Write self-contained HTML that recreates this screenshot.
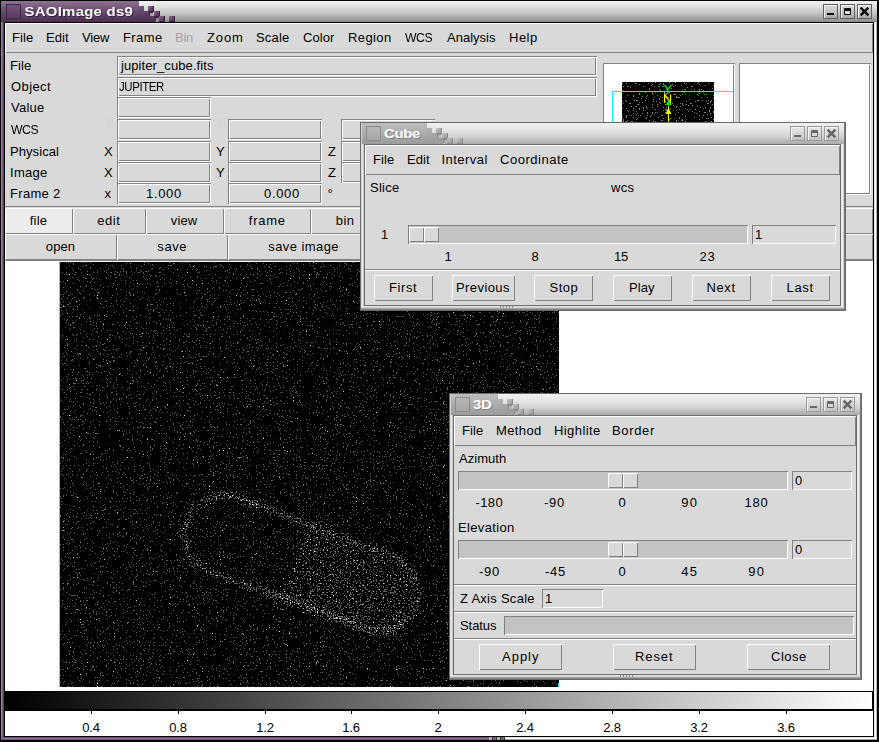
<!DOCTYPE html>
<html><head><meta charset="utf-8"><title>SAOImage ds9</title>
<style>
html,body{margin:0;padding:0;}
body{width:879px;height:742px;position:relative;overflow:hidden;background:#d9d9d9;font-family:"Liberation Sans",sans-serif;}
body>div,body>svg,body>span{position:absolute;display:block;}
.t{white-space:nowrap;line-height:16px;height:16px;}
</style></head><body>
<div style="left:0px;top:0px;width:879px;height:742px;background:#000;"></div>
<div style="left:1px;top:1px;width:3px;height:739px;background:linear-gradient(90deg,#a184a3 0 33%,#7b5c7f 33% 66%,#5a3c5f 66%);"></div>
<div style="left:874px;top:1px;width:3px;height:739px;background:linear-gradient(90deg,#e4e4e4 0 33%,#ffffff 33% 66%,#b4b4b4 66%);"></div>
<div style="left:1px;top:737px;width:876px;height:3px;background:linear-gradient(180deg,#ececec 0 33%,#ffffff 33% 66%,#a8a8a8 66%);"></div>
<div style="left:1px;top:737px;width:488px;height:3px;background:linear-gradient(180deg,#6b4c70 0 33%,#93759a 33% 66%,#6f5074 66%);"></div>
<div style="left:1px;top:1px;width:876px;height:21px;background:linear-gradient(180deg,#f2f2f2 0%,#e2e2e2 25%,#c4c4c4 60%,#8c8c8c 100%);"></div>
<div style="left:1px;top:1px;width:138px;height:21px;background:linear-gradient(180deg,#8f7192 0%,#6d4e72 45%,#4b3050 100%);"></div>
<div style="left:139px;top:6px;width:5px;height:16px;background:linear-gradient(180deg,#73547a,#4b3050);"></div>
<div style="left:144px;top:11px;width:5px;height:11px;background:linear-gradient(180deg,#65466b,#4b3050);"></div>
<div style="left:149px;top:16px;width:6px;height:6px;background:linear-gradient(180deg,#5a3c5f,#4b3050);"></div>
<div style="left:148px;top:6px;width:6px;height:6px;background:linear-gradient(135deg,#8a6c8e,#5b3c60 60%,#452a4a);box-shadow:inset -1px -1px 0 #3a2240;"></div>
<div style="left:154px;top:11px;width:6px;height:6px;background:linear-gradient(135deg,#8a6c8e,#5b3c60 60%,#452a4a);box-shadow:inset -1px -1px 0 #3a2240;"></div>
<div style="left:159px;top:16px;width:6px;height:6px;background:linear-gradient(135deg,#8a6c8e,#5b3c60 60%,#452a4a);box-shadow:inset -1px -1px 0 #3a2240;"></div>
<div style="left:169px;top:16px;width:6px;height:6px;background:linear-gradient(135deg,#8a6c8e,#5b3c60 60%,#452a4a);box-shadow:inset -1px -1px 0 #3a2240;"></div>
<div style="left:149px;top:12px;width:4px;height:4px;background:#a99fab;box-shadow:inset 1px 1px 0 #3a2240;"></div>
<div style="left:155px;top:17px;width:4px;height:4px;background:#8f8890;box-shadow:inset 1px 1px 0 #3a2240;"></div>
<div style="left:6px;top:4px;width:15px;height:15px;background:linear-gradient(180deg,#73557a,#583b5e);box-shadow:inset 0 0 0 1px #3d2643;"></div>
<span id="t1" class="t" style="left:24.50px;top:16.00px;color:#fff;font-size:15px;font-weight:bold;letter-spacing:0.225px;text-shadow:1px 1px 0 rgba(40,20,45,.8);margin-top:-12.70px;transform-origin:0 13.20px;transform:scale(1.0000,0.87);">SAOImage ds9</span>
<div style="left:823px;top:4px;width:15px;height:15px;box-sizing:border-box;border:1px solid #5e5e5e;background:linear-gradient(180deg,#dedede,#a9a9a9);box-shadow:inset 1px 1px 0 #f4f4f4;"></div>
<div style="left:827px;top:13px;width:7px;height:2px;background:#0a0a0a;"></div>
<div style="left:840px;top:4px;width:15px;height:15px;box-sizing:border-box;border:1px solid #5e5e5e;background:linear-gradient(180deg,#dedede,#a9a9a9);box-shadow:inset 1px 1px 0 #f4f4f4;"></div>
<div style="left:844px;top:8px;width:7px;height:7px;border:1px solid #0a0a0a;border-top-width:3px;box-sizing:border-box;background:#dadada;border-radius:1px;"></div>
<div style="left:857px;top:4px;width:15px;height:15px;box-sizing:border-box;border:1px solid #5e5e5e;background:linear-gradient(180deg,#dedede,#a9a9a9);box-shadow:inset 1px 1px 0 #f4f4f4;"></div>
<svg style="left:857px;top:4px" width="15" height="15" viewBox="0 0 15 15"><path d="M3.6 3.6 L11.4 11.4 M11.4 3.6 L3.6 11.4" stroke="#0a0a0a" stroke-width="2.5" stroke-linecap="butt"/></svg>
<div style="left:5px;top:23px;width:868px;height:713px;background:#d9d9d9;"></div>
<div style="left:5px;top:23px;width:868px;height:30px;background:#d9d9d9;box-shadow:inset 1px 1px 0 #ffffff,inset -1px -1px 0 #828282;"></div>
<span id="t2" class="t" style="left:12.00px;top:42.00px;color:#000;font-size:13px;font-weight:normal;letter-spacing:0.094px;margin-top:-12.00px;">File</span>
<span id="t3" class="t" style="left:46.00px;top:42.00px;color:#000;font-size:13px;font-weight:normal;letter-spacing:0.070px;margin-top:-12.00px;">Edit</span>
<span id="t4" class="t" style="left:82.00px;top:42.00px;color:#000;font-size:13px;font-weight:normal;letter-spacing:-0.185px;margin-top:-12.00px;">View</span>
<span id="t5" class="t" style="left:123.00px;top:42.00px;color:#000;font-size:13px;font-weight:normal;letter-spacing:0.418px;margin-top:-12.00px;">Frame</span>
<span id="t6" class="t" style="left:207.00px;top:42.00px;color:#000;font-size:13px;font-weight:normal;letter-spacing:0.866px;margin-top:-12.00px;">Zoom</span>
<span id="t7" class="t" style="left:256.00px;top:42.00px;color:#000;font-size:13px;font-weight:normal;letter-spacing:0.178px;margin-top:-12.00px;">Scale</span>
<span id="t8" class="t" style="left:303.00px;top:42.00px;color:#000;font-size:13px;font-weight:normal;letter-spacing:0.066px;margin-top:-12.00px;">Color</span>
<span id="t9" class="t" style="left:348.00px;top:42.00px;color:#000;font-size:13px;font-weight:normal;letter-spacing:0.407px;margin-top:-12.00px;">Region</span>
<span id="t10" class="t" style="left:405.00px;top:42.00px;color:#000;font-size:13px;font-weight:normal;letter-spacing:-0.450px;margin-top:-12.00px;transform-origin:0 12.50px;transform:scale(0.9409,1);">WCS</span>
<span id="t11" class="t" style="left:447.00px;top:42.00px;color:#000;font-size:13px;font-weight:normal;letter-spacing:0.013px;margin-top:-12.00px;">Analysis</span>
<span id="t12" class="t" style="left:509.00px;top:42.00px;color:#000;font-size:13px;font-weight:normal;letter-spacing:0.498px;margin-top:-12.00px;">Help</span>
<span id="t13" class="t" style="left:175.00px;top:42.00px;color:#a3a3a3;font-size:13px;font-weight:normal;letter-spacing:-0.280px;margin-top:-12.00px;">Bin</span>
<span id="t14" class="t" style="left:10.00px;top:70.00px;color:#000;font-size:13px;font-weight:normal;letter-spacing:0.094px;margin-top:-12.00px;">File</span>
<span id="t15" class="t" style="left:11.00px;top:91.00px;color:#000;font-size:13px;font-weight:normal;letter-spacing:0.408px;margin-top:-12.00px;">Object</span>
<span id="t16" class="t" style="left:11.00px;top:112.00px;color:#000;font-size:13px;font-weight:normal;letter-spacing:0.236px;margin-top:-12.00px;">Value</span>
<span id="t17" class="t" style="left:11.00px;top:134.00px;color:#000;font-size:13px;font-weight:normal;letter-spacing:-0.450px;margin-top:-12.00px;transform-origin:0 12.50px;transform:scale(0.9409,1);">WCS</span>
<span id="t18" class="t" style="left:10.00px;top:156.00px;color:#000;font-size:13px;font-weight:normal;letter-spacing:0.069px;margin-top:-12.00px;">Physical</span>
<span id="t19" class="t" style="left:10.00px;top:177.00px;color:#000;font-size:13px;font-weight:normal;letter-spacing:0.275px;margin-top:-12.00px;">Image</span>
<span id="t20" class="t" style="left:10.00px;top:198.00px;color:#000;font-size:13px;font-weight:normal;letter-spacing:0.305px;margin-top:-12.00px;">Frame 2</span>
<div style="left:117px;top:56px;width:480px;height:20px;background:#d9d9d9;box-shadow:inset 1px 1px 0 #828282,inset -1px -1px 0 #ffffff,inset 2px 2px 0 #ffffff,inset -2px -2px 0 #828282;"></div>
<div style="left:117px;top:77px;width:480px;height:20px;background:#d9d9d9;box-shadow:inset 1px 1px 0 #828282,inset -1px -1px 0 #ffffff,inset 2px 2px 0 #ffffff,inset -2px -2px 0 #828282;"></div>
<span id="t21" class="t" style="left:121.00px;top:70.00px;color:#000;font-size:13px;font-weight:normal;letter-spacing:0.091px;margin-top:-12.00px;">jupiter_cube.fits</span>
<span id="t22" class="t" style="left:119.00px;top:91.00px;color:#000;font-size:13px;font-weight:normal;letter-spacing:-0.450px;margin-top:-12.00px;transform-origin:0 12.50px;transform:scale(0.8809,1);">JUPITER</span>
<div style="left:117px;top:97px;width:94px;height:21px;background:#d9d9d9;box-shadow:inset 1px 1px 0 #828282,inset -1px -1px 0 #ffffff,inset 2px 2px 0 #ffffff,inset -2px -2px 0 #828282;"></div>
<div style="left:117px;top:119px;width:94px;height:21px;background:#d9d9d9;box-shadow:inset 1px 1px 0 #828282,inset -1px -1px 0 #ffffff,inset 2px 2px 0 #ffffff,inset -2px -2px 0 #828282;"></div>
<div style="left:228px;top:119px;width:94px;height:21px;background:#d9d9d9;box-shadow:inset 1px 1px 0 #828282,inset -1px -1px 0 #ffffff,inset 2px 2px 0 #ffffff,inset -2px -2px 0 #828282;"></div>
<div style="left:341px;top:119px;width:94px;height:21px;background:#d9d9d9;box-shadow:inset 1px 1px 0 #828282,inset -1px -1px 0 #ffffff,inset 2px 2px 0 #ffffff,inset -2px -2px 0 #828282;"></div>
<div style="left:117px;top:141px;width:94px;height:21px;background:#d9d9d9;box-shadow:inset 1px 1px 0 #828282,inset -1px -1px 0 #ffffff,inset 2px 2px 0 #ffffff,inset -2px -2px 0 #828282;"></div>
<div style="left:228px;top:141px;width:94px;height:21px;background:#d9d9d9;box-shadow:inset 1px 1px 0 #828282,inset -1px -1px 0 #ffffff,inset 2px 2px 0 #ffffff,inset -2px -2px 0 #828282;"></div>
<div style="left:341px;top:141px;width:94px;height:21px;background:#d9d9d9;box-shadow:inset 1px 1px 0 #828282,inset -1px -1px 0 #ffffff,inset 2px 2px 0 #ffffff,inset -2px -2px 0 #828282;"></div>
<div style="left:117px;top:162px;width:94px;height:21px;background:#d9d9d9;box-shadow:inset 1px 1px 0 #828282,inset -1px -1px 0 #ffffff,inset 2px 2px 0 #ffffff,inset -2px -2px 0 #828282;"></div>
<div style="left:228px;top:162px;width:94px;height:21px;background:#d9d9d9;box-shadow:inset 1px 1px 0 #828282,inset -1px -1px 0 #ffffff,inset 2px 2px 0 #ffffff,inset -2px -2px 0 #828282;"></div>
<div style="left:341px;top:162px;width:94px;height:21px;background:#d9d9d9;box-shadow:inset 1px 1px 0 #828282,inset -1px -1px 0 #ffffff,inset 2px 2px 0 #ffffff,inset -2px -2px 0 #828282;"></div>
<div style="left:117px;top:183px;width:94px;height:21px;background:#d9d9d9;box-shadow:inset 1px 1px 0 #828282,inset -1px -1px 0 #ffffff,inset 2px 2px 0 #ffffff,inset -2px -2px 0 #828282;"></div>
<div style="left:228px;top:183px;width:94px;height:21px;background:#d9d9d9;box-shadow:inset 1px 1px 0 #828282,inset -1px -1px 0 #ffffff,inset 2px 2px 0 #ffffff,inset -2px -2px 0 #828282;"></div>
<div style="left:107px;top:118px;width:7px;height:10px;background:#d5d8d1;"></div>
<div style="left:218px;top:118px;width:7px;height:10px;background:#d5d8d1;"></div>
<span id="t23" class="t" style="left:104.00px;top:156.00px;color:#000;font-size:13px;font-weight:normal;letter-spacing:0.000px;margin-top:-12.00px;">X</span>
<span id="t24" class="t" style="left:216.00px;top:156.00px;color:#000;font-size:13px;font-weight:normal;letter-spacing:0.000px;margin-top:-12.00px;">Y</span>
<span id="t25" class="t" style="left:328.00px;top:156.00px;color:#000;font-size:13px;font-weight:normal;letter-spacing:0.000px;margin-top:-12.00px;">Z</span>
<span id="t26" class="t" style="left:104.00px;top:177.00px;color:#000;font-size:13px;font-weight:normal;letter-spacing:0.000px;margin-top:-12.00px;">X</span>
<span id="t27" class="t" style="left:216.00px;top:177.00px;color:#000;font-size:13px;font-weight:normal;letter-spacing:0.000px;margin-top:-12.00px;">Y</span>
<span id="t28" class="t" style="left:328.00px;top:177.00px;color:#000;font-size:13px;font-weight:normal;letter-spacing:0.000px;margin-top:-12.00px;">Z</span>
<span id="t29" class="t" style="left:104.50px;top:198.00px;color:#000;font-size:13px;font-weight:normal;letter-spacing:0.000px;margin-top:-12.00px;">x</span>
<span id="t30" class="t" style="left:146.00px;top:198.00px;color:#000;font-size:13px;font-weight:normal;letter-spacing:0.675px;margin-top:-12.00px;">1.000</span>
<span id="t31" class="t" style="left:264.00px;top:198.00px;color:#000;font-size:13px;font-weight:normal;letter-spacing:0.675px;margin-top:-12.00px;">0.000</span>
<span id="t32" class="t" style="left:327.50px;top:197.50px;color:#000;font-size:13px;font-weight:normal;letter-spacing:0.000px;margin-top:-12.00px;">°</span>
<div style="left:603px;top:63px;width:132px;height:132px;background:#fff;box-shadow:inset 1px 1px 0 #828282,inset -1px -1px 0 #ffffff,inset 2px 2px 0 #ffffff,inset -2px -2px 0 #828282;"></div>
<div style="left:739px;top:63px;width:132px;height:132px;background:#fff;box-shadow:inset 1px 1px 0 #828282,inset -1px -1px 0 #ffffff,inset 2px 2px 0 #ffffff,inset -2px -2px 0 #828282;"></div>
<svg style="left:622px;top:82px" width="92" height="112"><defs><filter id="nz2" x="0" y="0" width="100%" height="100%" color-interpolation-filters="sRGB">
<feTurbulence type="fractalNoise" baseFrequency="0.7 0.66" numOctaves="2" seed="3" result="n"/>
<feColorMatrix in="n" type="matrix" values="0 0 0 0 0  0 0 0 0 0  0 0 0 0 0  60 0 0 0 -40.1" result="a"/>
<feColorMatrix in="a" type="matrix" values="0 0 0 0 0.5  0 0 0 0 0.5  0 0 0 0 0.5  0 0 0 1 0"/>
</filter></defs><rect width="92" height="112" fill="#000"/><rect width="92" height="112" filter="url(#nz2)"/></svg>
<div style="left:612px;top:91px;width:121px;height:1px;background:#00ffff;"></div>
<div style="left:559px;top:680px;width:1px;height:7px;background:#00ffff;"></div>
<div style="left:612px;top:91px;width:1px;height:103px;background:#00ffff;"></div>
<svg style="left:655px;top:80px" width="26" height="50" viewBox="0 0 26 50">
<path d="M9.5 5 L12.8 9.6 L16.1 5 M12.8 9.6 L12.8 14" stroke="#00e400" stroke-width="1.4" fill="none"/>
<path d="M9.6 22.8 L9.6 14.4 L15.5 22.8 L15.5 14.4" stroke="#ffff00" stroke-width="1.3" fill="none"/>
<rect x="13" y="27" width="1" height="23" fill="#ffff00"/>
<rect x="13" y="21" width="1" height="6" fill="#00e400"/>
<path d="M13.5 19.6 L10.6 25 L16.4 25 Z" fill="#00e400"/>
<path d="M13.5 27.6 L10.6 34 L16.4 34 Z" fill="#ffff00"/>
</svg>
<div style="left:5px;top:206px;width:868px;height:1px;background:#828282;"></div>
<div style="left:5px;top:208px;width:68px;height:26px;background:#ececec;box-shadow:inset 1px 1px 0 #ffffff,inset -1px -1px 0 #828282;"></div>
<span id="t33" class="t" style="left:29.80px;top:225.00px;color:#000;font-size:13px;font-weight:normal;letter-spacing:0.204px;margin-top:-12.00px;">file</span>
<div style="left:73px;top:208px;width:73px;height:26px;background:#d9d9d9;box-shadow:inset 1px 1px 0 #ffffff,inset -1px -1px 0 #828282;"></div>
<span id="t34" class="t" style="left:97.30px;top:225.00px;color:#000;font-size:13px;font-weight:normal;letter-spacing:0.551px;margin-top:-12.00px;">edit</span>
<div style="left:146px;top:208px;width:78px;height:26px;background:#d9d9d9;box-shadow:inset 1px 1px 0 #ffffff,inset -1px -1px 0 #828282;"></div>
<span id="t35" class="t" style="left:170.80px;top:225.00px;color:#000;font-size:13px;font-weight:normal;letter-spacing:0.127px;margin-top:-12.00px;">view</span>
<div style="left:224px;top:208px;width:87px;height:26px;background:#d9d9d9;box-shadow:inset 1px 1px 0 #ffffff,inset -1px -1px 0 #828282;"></div>
<span id="t36" class="t" style="left:248.80px;top:225.00px;color:#000;font-size:13px;font-weight:normal;letter-spacing:0.750px;margin-top:-12.00px;">frame</span>
<div style="left:311px;top:208px;width:69px;height:26px;background:#d9d9d9;box-shadow:inset 1px 1px 0 #ffffff,inset -1px -1px 0 #828282;"></div>
<span id="t37" class="t" style="left:335.80px;top:225.00px;color:#000;font-size:13px;font-weight:normal;letter-spacing:0.441px;margin-top:-12.00px;">bin</span>
<div style="left:5px;top:234px;width:112px;height:26px;background:#d9d9d9;box-shadow:inset 1px 1px 0 #ffffff,inset -1px -1px 0 #828282;"></div>
<span id="t38" class="t" style="left:45.80px;top:251.00px;color:#000;font-size:13px;font-weight:normal;letter-spacing:0.103px;margin-top:-12.00px;">open</span>
<div style="left:117px;top:234px;width:111px;height:26px;background:#d9d9d9;box-shadow:inset 1px 1px 0 #ffffff,inset -1px -1px 0 #828282;"></div>
<span id="t39" class="t" style="left:157.30px;top:251.00px;color:#000;font-size:13px;font-weight:normal;letter-spacing:0.590px;margin-top:-12.00px;">save</span>
<div style="left:228px;top:234px;width:152px;height:26px;background:#d9d9d9;box-shadow:inset 1px 1px 0 #ffffff,inset -1px -1px 0 #828282;"></div>
<span id="t40" class="t" style="left:268.30px;top:251.00px;color:#000;font-size:13px;font-weight:normal;letter-spacing:0.417px;margin-top:-12.00px;">save image</span>
<div style="left:380px;top:208px;width:493px;height:26px;background:#d9d9d9;box-shadow:inset 1px 1px 0 #ffffff,inset -1px -1px 0 #828282;"></div>
<div style="left:380px;top:234px;width:493px;height:26px;background:#d9d9d9;box-shadow:inset 1px 1px 0 #ffffff,inset -1px -1px 0 #828282;"></div>
<div style="left:5px;top:260px;width:868px;height:430px;background:#fff;"></div>
<div style="left:5px;top:260px;width:868px;height:1px;background:#828282;"></div>
<svg style="left:59px;top:262px" width="500" height="425" viewBox="0 0 500 425">
<defs>
<filter id="nz" x="0" y="0" width="500" height="425" filterUnits="userSpaceOnUse" color-interpolation-filters="sRGB">
<feTurbulence type="fractalNoise" baseFrequency="0.7 0.66" numOctaves="2" seed="7" result="n"/>
<feColorMatrix in="n" type="matrix" values="0 0 0 0 1  0 0 0 0 1  0 0 0 0 1  1 0 0 0 0" result="na"/>
<feGaussianBlur in="SourceAlpha" stdDeviation="1.6" result="sb"/>
<feComposite in="na" in2="sb" operator="arithmetic" k1="0" k2="1" k3="0.145" k4="0" result="sum"/>
<feColorMatrix in="sum" type="matrix" values="0 0 0 0.7 -0.13  0 0 0 0.7 -0.13  0 0 0 0.7 -0.13  0 0 0 60 -40.6"/>
</filter>
<filter id="nzb" x="0" y="0" width="500" height="425" filterUnits="userSpaceOnUse" color-interpolation-filters="sRGB">
<feTurbulence type="fractalNoise" baseFrequency="0.7 0.66" numOctaves="2" seed="23" result="n"/>
<feColorMatrix in="n" type="matrix" values="0 0 0 0 1  0 0 0 0 1  0 0 0 0 1  1 0 0 0 0" result="na"/>
<feGaussianBlur in="SourceAlpha" stdDeviation="1.4" result="sb"/>
<feComposite in="na" in2="sb" operator="arithmetic" k1="0" k2="1" k3="0.2" k4="0" result="sum"/>
<feColorMatrix in="sum" type="matrix" values="0 0 0 1.5 -0.45  0 0 0 1.5 -0.45  0 0 0 1.5 -0.45  0 0 0 60 -49"/>
</filter>
</defs>
<rect width="500" height="425" fill="#000"/>
<g filter="url(#nz)">
<g transform="translate(242,301.5) rotate(20.5)">
<rect x="-122" y="-39.5" width="244" height="79" rx="39.5" ry="39.5" fill="none" stroke="#000" stroke-width="8" stroke-opacity="0.75"/>
<path d="M-8 -39.5 L82.5 -39.5 A39.5 39.5 0 0 1 82.5 39.5 L-8 39.5 Z" fill="#000" fill-opacity="0.5"/>
<path d="M-25 37.5 L82.5 37.5 A37.5 37.5 0 0 0 119 10" fill="none" stroke="#000" stroke-width="8" stroke-opacity="0.75"/>
</g>
<circle cx="237" cy="131" r="2.5" fill="#000" fill-opacity="0.9"/>
</g>
<g filter="url(#nzb)">
<g transform="translate(242,301.5) rotate(20.5)">
<rect x="-122" y="-39.5" width="244" height="79" rx="39.5" ry="39.5" fill="none" stroke="#000" stroke-width="5" stroke-opacity="0.5"/>
<path d="M-8 -39.5 L82.5 -39.5 A39.5 39.5 0 0 1 82.5 39.5 L-8 39.5 Z" fill="#000" fill-opacity="0.3"/>
<path d="M-10 38.5 L82.5 38.5 A38.5 38.5 0 0 0 118 14" fill="none" stroke="#000" stroke-width="6" stroke-opacity="0.6"/>
<path d="M-90 -39 L-40 -39" fill="none" stroke="#000" stroke-width="3" stroke-opacity="0.6"/>
</g></g>
<rect x="0" y="0" width="1" height="425" fill="#00ffff"/>
<rect x="499" y="421" width="1" height="4" fill="#00ffff"/>
</svg>
<div style="left:5px;top:690px;width:868px;height:46px;background:#fff;"></div>
<div style="left:5px;top:691px;width:868px;height:20px;background:#000;"></div>
<div style="left:6px;top:692px;width:866px;height:17px;background:linear-gradient(90deg,#000,#fff);"></div>
<span id="t41" class="t" style="left:82.25px;top:732.00px;color:#000;font-size:13px;font-weight:normal;letter-spacing:-0.171px;margin-top:-12.00px;">0.4</span>
<div style="left:91px;top:711px;width:1px;height:3px;background:#000;"></div>
<span id="t42" class="t" style="left:169.25px;top:732.00px;color:#000;font-size:13px;font-weight:normal;letter-spacing:-0.171px;margin-top:-12.00px;">0.8</span>
<div style="left:178px;top:711px;width:1px;height:3px;background:#000;"></div>
<span id="t43" class="t" style="left:256.25px;top:732.00px;color:#000;font-size:13px;font-weight:normal;letter-spacing:-0.171px;margin-top:-12.00px;">1.2</span>
<div style="left:265px;top:711px;width:1px;height:3px;background:#000;"></div>
<span id="t44" class="t" style="left:342.25px;top:732.00px;color:#000;font-size:13px;font-weight:normal;letter-spacing:-0.171px;margin-top:-12.00px;">1.6</span>
<div style="left:351px;top:711px;width:1px;height:3px;background:#000;"></div>
<span id="t45" class="t" style="left:434.50px;top:732.00px;color:#000;font-size:13px;font-weight:normal;letter-spacing:0.000px;margin-top:-12.00px;">2</span>
<div style="left:438px;top:711px;width:1px;height:3px;background:#000;"></div>
<span id="t46" class="t" style="left:516.25px;top:732.00px;color:#000;font-size:13px;font-weight:normal;letter-spacing:-0.171px;margin-top:-12.00px;">2.4</span>
<div style="left:525px;top:711px;width:1px;height:3px;background:#000;"></div>
<span id="t47" class="t" style="left:603.25px;top:732.00px;color:#000;font-size:13px;font-weight:normal;letter-spacing:-0.171px;margin-top:-12.00px;">2.8</span>
<div style="left:612px;top:711px;width:1px;height:3px;background:#000;"></div>
<span id="t48" class="t" style="left:690.25px;top:732.00px;color:#000;font-size:13px;font-weight:normal;letter-spacing:-0.171px;margin-top:-12.00px;">3.2</span>
<div style="left:699px;top:711px;width:1px;height:3px;background:#000;"></div>
<span id="t49" class="t" style="left:777.25px;top:732.00px;color:#000;font-size:13px;font-weight:normal;letter-spacing:-0.171px;margin-top:-12.00px;">3.6</span>
<div style="left:786px;top:711px;width:1px;height:3px;background:#000;"></div>
<div style="left:360px;top:122px;width:486px;height:189px;background:#6a6a6a;"></div>
<div style="left:361px;top:123px;width:484px;height:187px;background:#b4b4b4;"></div>
<div style="left:361px;top:123px;width:3px;height:187px;background:linear-gradient(90deg,#dcdcdc 0 33%,#e6e6e6 33% 66%,#c6c6c6 66%);"></div>
<div style="left:841px;top:123px;width:4px;height:187px;background:linear-gradient(90deg,#e8e8e8 0 25%,#f0f0f0 25% 50%,#d0d0d0 50% 75%,#7a7a7a 75%);"></div>
<div style="left:361px;top:306px;width:484px;height:4px;background:linear-gradient(180deg,#e4e4e4 0 25%,#cfcfcf 25% 50%,#a8a8a8 50% 75%,#808080 75%);"></div>
<div style="left:844px;top:123px;width:1px;height:187px;background:#7a7a7a;"></div>
<div style="left:361px;top:309px;width:484px;height:1px;background:#808080;"></div>
<div style="left:361px;top:123px;width:483px;height:21px;background:linear-gradient(180deg,#f0f0f0 0%,#e6e6e6 30%,#d2d2d2 65%,#aaaaaa 100%);"></div>
<div style="left:361px;top:123px;width:66px;height:21px;background:linear-gradient(180deg,#bebebe 0%,#adadad 50%,#9b9b9b 100%);"></div>
<div style="left:361px;top:123px;width:1px;height:21px;background:#d2d2d2;"></div>
<div style="left:427px;top:128px;width:5px;height:16px;background:linear-gradient(180deg,#b2b2b2,#9b9b9b);"></div>
<div style="left:432px;top:133px;width:5px;height:11px;background:linear-gradient(180deg,#a8a8a8,#9b9b9b);"></div>
<div style="left:437px;top:138px;width:6px;height:6px;background:#9e9e9e;"></div>
<div style="left:436px;top:128px;width:6px;height:6px;background:linear-gradient(135deg,#c4c4c4,#a6a6a6 60%,#969696);box-shadow:inset -1px -1px 0 #8a8a8a;"></div>
<div style="left:442px;top:133px;width:6px;height:6px;background:linear-gradient(135deg,#c4c4c4,#a6a6a6 60%,#969696);box-shadow:inset -1px -1px 0 #8a8a8a;"></div>
<div style="left:447px;top:138px;width:6px;height:6px;background:linear-gradient(135deg,#c4c4c4,#a6a6a6 60%,#969696);box-shadow:inset -1px -1px 0 #8a8a8a;"></div>
<div style="left:457px;top:138px;width:6px;height:6px;background:linear-gradient(135deg,#c4c4c4,#a6a6a6 60%,#969696);box-shadow:inset -1px -1px 0 #8a8a8a;"></div>
<div style="left:437px;top:134px;width:4px;height:4px;background:#b9b9b9;box-shadow:inset 1px 1px 0 #8a8a8a;"></div>
<div style="left:443px;top:139px;width:4px;height:4px;background:#b0b0b0;box-shadow:inset 1px 1px 0 #8a8a8a;"></div>
<div style="left:366px;top:126px;width:15px;height:15px;background:linear-gradient(180deg,#b8b8b8,#a6a6a6);box-shadow:inset 0 0 0 1px #8a8a8a;"></div>
<span id="t50" class="t" style="left:384.00px;top:138.00px;color:#fff;font-size:15px;font-weight:bold;letter-spacing:-0.386px;text-shadow:1px 1px 0 rgba(120,120,120,.8);margin-top:-12.70px;transform-origin:0 13.20px;transform:scale(1.0000,0.87);">Cube</span>
<div style="left:790px;top:126px;width:15px;height:15px;box-sizing:border-box;border:1px solid #9a9a9a;background:linear-gradient(180deg,#e8e8e8,#c2c2c2);box-shadow:inset 1px 1px 0 #f4f4f4;"></div>
<div style="left:794px;top:135px;width:7px;height:2px;background:#666;"></div>
<div style="left:807px;top:126px;width:15px;height:15px;box-sizing:border-box;border:1px solid #9a9a9a;background:linear-gradient(180deg,#e8e8e8,#c2c2c2);box-shadow:inset 1px 1px 0 #f4f4f4;"></div>
<div style="left:811px;top:130px;width:7px;height:7px;border:1px solid #666;border-top-width:3px;box-sizing:border-box;background:#dadada;border-radius:1px;"></div>
<div style="left:824px;top:126px;width:15px;height:15px;box-sizing:border-box;border:1px solid #9a9a9a;background:linear-gradient(180deg,#e8e8e8,#c2c2c2);box-shadow:inset 1px 1px 0 #f4f4f4;"></div>
<svg style="left:824px;top:126px" width="15" height="15" viewBox="0 0 15 15"><path d="M3.6 3.6 L11.4 11.4 M11.4 3.6 L3.6 11.4" stroke="#666" stroke-width="2.5" stroke-linecap="butt"/></svg>
<div style="left:364px;top:144px;width:477px;height:162px;background:#6e6e6e;"></div>
<div style="left:365px;top:145px;width:475px;height:160px;background:#d9d9d9;"></div>
<div style="left:365px;top:145px;width:475px;height:30px;background:#d9d9d9;box-shadow:inset 1px 1px 0 #ffffff,inset -1px -1px 0 #828282;"></div>
<span id="t51" class="t" style="left:373.00px;top:164.00px;color:#000;font-size:13px;font-weight:normal;letter-spacing:0.094px;margin-top:-12.00px;">File</span>
<span id="t52" class="t" style="left:407.00px;top:164.00px;color:#000;font-size:13px;font-weight:normal;letter-spacing:0.070px;margin-top:-12.00px;">Edit</span>
<span id="t53" class="t" style="left:441.50px;top:164.00px;color:#000;font-size:13px;font-weight:normal;letter-spacing:0.465px;margin-top:-12.00px;">Interval</span>
<span id="t54" class="t" style="left:500.00px;top:164.00px;color:#000;font-size:13px;font-weight:normal;letter-spacing:0.515px;margin-top:-12.00px;">Coordinate</span>
<span id="t55" class="t" style="left:370.00px;top:192.00px;color:#000;font-size:13px;font-weight:normal;letter-spacing:0.263px;margin-top:-12.00px;">Slice</span>
<span id="t56" class="t" style="left:611.00px;top:192.00px;color:#000;font-size:13px;font-weight:normal;letter-spacing:0.306px;margin-top:-12.00px;">wcs</span>
<span id="t57" class="t" style="left:381.00px;top:239.00px;color:#000;font-size:13px;font-weight:normal;letter-spacing:0.000px;margin-top:-12.00px;">1</span>
<div style="left:408px;top:225px;width:340px;height:19px;background:#c3c3c3;box-shadow:inset 1px 1px 0 #828282,inset -1px -1px 0 #ffffff;"></div>
<div style="left:409px;top:227px;width:15px;height:15px;background:#d9d9d9;box-shadow:inset 1px 1px 0 #ffffff,inset -1px -1px 0 #828282;"></div>
<div style="left:424px;top:227px;width:15px;height:15px;background:#d9d9d9;box-shadow:inset 1px 1px 0 #ffffff,inset -1px -1px 0 #828282;"></div>
<div style="left:752px;top:225px;width:84px;height:19px;background:#d9d9d9;box-shadow:inset 1px 1px 0 #828282,inset -1px -1px 0 #ffffff;"></div>
<span id="t58" class="t" style="left:755.00px;top:239.00px;color:#000;font-size:13px;font-weight:normal;letter-spacing:0.000px;margin-top:-12.00px;">1</span>
<span id="t59" class="t" style="left:444.50px;top:261.00px;color:#000;font-size:13px;font-weight:normal;letter-spacing:0.000px;margin-top:-12.00px;">1</span>
<span id="t60" class="t" style="left:531.50px;top:261.00px;color:#000;font-size:13px;font-weight:normal;letter-spacing:0.000px;margin-top:-12.00px;">8</span>
<span id="t61" class="t" style="left:614.00px;top:261.00px;color:#000;font-size:13px;font-weight:normal;letter-spacing:-0.230px;margin-top:-12.00px;">15</span>
<span id="t62" class="t" style="left:699.50px;top:261.00px;color:#000;font-size:13px;font-weight:normal;letter-spacing:0.770px;margin-top:-12.00px;">23</span>
<div style="left:365px;top:269px;width:475px;height:1px;background:#828282;"></div>
<div style="left:365px;top:270px;width:475px;height:1px;background:#ffffff;"></div>
<div style="left:374px;top:275px;width:59px;height:26px;background:#d9d9d9;box-shadow:inset 1px 1px 0 #ffffff,inset -1px -1px 0 #828282;"></div>
<span id="t63" class="t" style="left:389.00px;top:292.00px;color:#000;font-size:13px;font-weight:normal;letter-spacing:0.585px;margin-top:-12.00px;">First</span>
<div style="left:452px;top:275px;width:63px;height:26px;background:#d9d9d9;box-shadow:inset 1px 1px 0 #ffffff,inset -1px -1px 0 #828282;"></div>
<span id="t64" class="t" style="left:456.00px;top:292.00px;color:#000;font-size:13px;font-weight:normal;letter-spacing:0.417px;margin-top:-12.00px;">Previous</span>
<div style="left:534px;top:275px;width:59px;height:26px;background:#d9d9d9;box-shadow:inset 1px 1px 0 #ffffff,inset -1px -1px 0 #828282;"></div>
<span id="t65" class="t" style="left:549.50px;top:292.00px;color:#000;font-size:13px;font-weight:normal;letter-spacing:0.496px;margin-top:-12.00px;">Stop</span>
<div style="left:613px;top:275px;width:59px;height:26px;background:#d9d9d9;box-shadow:inset 1px 1px 0 #ffffff,inset -1px -1px 0 #828282;"></div>
<span id="t66" class="t" style="left:629.00px;top:292.00px;color:#000;font-size:13px;font-weight:normal;letter-spacing:0.070px;margin-top:-12.00px;">Play</span>
<div style="left:692px;top:275px;width:59px;height:26px;background:#d9d9d9;box-shadow:inset 1px 1px 0 #ffffff,inset -1px -1px 0 #828282;"></div>
<span id="t67" class="t" style="left:706.50px;top:292.00px;color:#000;font-size:13px;font-weight:normal;letter-spacing:0.627px;margin-top:-12.00px;">Next</span>
<div style="left:771px;top:275px;width:59px;height:26px;background:#d9d9d9;box-shadow:inset 1px 1px 0 #ffffff,inset -1px -1px 0 #828282;"></div>
<span id="t68" class="t" style="left:786.50px;top:292.00px;color:#000;font-size:13px;font-weight:normal;letter-spacing:0.680px;margin-top:-12.00px;">Last</span>
<div style="left:500px;top:306px;width:14px;height:2px;background:repeating-linear-gradient(90deg,#8a8a8a 0 1px,#d8d8d8 1px 3px);"></div>
<div style="left:449px;top:393px;width:413px;height:287px;background:#6a6a6a;"></div>
<div style="left:450px;top:394px;width:411px;height:285px;background:#b4b4b4;"></div>
<div style="left:450px;top:394px;width:3px;height:285px;background:linear-gradient(90deg,#dcdcdc 0 33%,#e6e6e6 33% 66%,#c6c6c6 66%);"></div>
<div style="left:857px;top:394px;width:4px;height:285px;background:linear-gradient(90deg,#e8e8e8 0 25%,#f0f0f0 25% 50%,#d0d0d0 50% 75%,#7a7a7a 75%);"></div>
<div style="left:450px;top:675px;width:411px;height:4px;background:linear-gradient(180deg,#e4e4e4 0 25%,#cfcfcf 25% 50%,#a8a8a8 50% 75%,#808080 75%);"></div>
<div style="left:860px;top:394px;width:1px;height:285px;background:#7a7a7a;"></div>
<div style="left:450px;top:678px;width:411px;height:1px;background:#808080;"></div>
<div style="left:450px;top:394px;width:410px;height:21px;background:linear-gradient(180deg,#f0f0f0 0%,#e6e6e6 30%,#d2d2d2 65%,#aaaaaa 100%);"></div>
<div style="left:450px;top:394px;width:48px;height:21px;background:linear-gradient(180deg,#bebebe 0%,#adadad 50%,#9b9b9b 100%);"></div>
<div style="left:450px;top:394px;width:1px;height:21px;background:#d2d2d2;"></div>
<div style="left:498px;top:399px;width:5px;height:16px;background:linear-gradient(180deg,#b2b2b2,#9b9b9b);"></div>
<div style="left:503px;top:404px;width:5px;height:11px;background:linear-gradient(180deg,#a8a8a8,#9b9b9b);"></div>
<div style="left:508px;top:409px;width:6px;height:6px;background:#9e9e9e;"></div>
<div style="left:507px;top:399px;width:6px;height:6px;background:linear-gradient(135deg,#c4c4c4,#a6a6a6 60%,#969696);box-shadow:inset -1px -1px 0 #8a8a8a;"></div>
<div style="left:513px;top:404px;width:6px;height:6px;background:linear-gradient(135deg,#c4c4c4,#a6a6a6 60%,#969696);box-shadow:inset -1px -1px 0 #8a8a8a;"></div>
<div style="left:518px;top:409px;width:6px;height:6px;background:linear-gradient(135deg,#c4c4c4,#a6a6a6 60%,#969696);box-shadow:inset -1px -1px 0 #8a8a8a;"></div>
<div style="left:528px;top:409px;width:6px;height:6px;background:linear-gradient(135deg,#c4c4c4,#a6a6a6 60%,#969696);box-shadow:inset -1px -1px 0 #8a8a8a;"></div>
<div style="left:508px;top:405px;width:4px;height:4px;background:#b9b9b9;box-shadow:inset 1px 1px 0 #8a8a8a;"></div>
<div style="left:514px;top:410px;width:4px;height:4px;background:#b0b0b0;box-shadow:inset 1px 1px 0 #8a8a8a;"></div>
<div style="left:455px;top:397px;width:15px;height:15px;background:linear-gradient(180deg,#b8b8b8,#a6a6a6);box-shadow:inset 0 0 0 1px #8a8a8a;"></div>
<span id="t69" class="t" style="left:473.00px;top:409.00px;color:#fff;font-size:15px;font-weight:bold;letter-spacing:-0.342px;text-shadow:1px 1px 0 rgba(120,120,120,.8);margin-top:-12.70px;transform-origin:0 13.20px;transform:scale(1.0000,0.87);">3D</span>
<div style="left:806px;top:397px;width:15px;height:15px;box-sizing:border-box;border:1px solid #9a9a9a;background:linear-gradient(180deg,#e8e8e8,#c2c2c2);box-shadow:inset 1px 1px 0 #f4f4f4;"></div>
<div style="left:810px;top:406px;width:7px;height:2px;background:#666;"></div>
<div style="left:823px;top:397px;width:15px;height:15px;box-sizing:border-box;border:1px solid #9a9a9a;background:linear-gradient(180deg,#e8e8e8,#c2c2c2);box-shadow:inset 1px 1px 0 #f4f4f4;"></div>
<div style="left:827px;top:401px;width:7px;height:7px;border:1px solid #666;border-top-width:3px;box-sizing:border-box;background:#dadada;border-radius:1px;"></div>
<div style="left:840px;top:397px;width:15px;height:15px;box-sizing:border-box;border:1px solid #9a9a9a;background:linear-gradient(180deg,#e8e8e8,#c2c2c2);box-shadow:inset 1px 1px 0 #f4f4f4;"></div>
<svg style="left:840px;top:397px" width="15" height="15" viewBox="0 0 15 15"><path d="M3.6 3.6 L11.4 11.4 M11.4 3.6 L3.6 11.4" stroke="#666" stroke-width="2.5" stroke-linecap="butt"/></svg>
<div style="left:453px;top:415px;width:404px;height:260px;background:#6e6e6e;"></div>
<div style="left:454px;top:416px;width:402px;height:258px;background:#d9d9d9;"></div>
<div style="left:454px;top:416px;width:402px;height:30px;background:#d9d9d9;box-shadow:inset 1px 1px 0 #ffffff,inset -1px -1px 0 #828282;"></div>
<span id="t70" class="t" style="left:462.00px;top:435.00px;color:#000;font-size:13px;font-weight:normal;letter-spacing:0.094px;margin-top:-12.00px;">File</span>
<span id="t71" class="t" style="left:496.00px;top:435.00px;color:#000;font-size:13px;font-weight:normal;letter-spacing:0.374px;margin-top:-12.00px;">Method</span>
<span id="t72" class="t" style="left:554.00px;top:435.00px;color:#000;font-size:13px;font-weight:normal;letter-spacing:0.411px;margin-top:-12.00px;">Highlite</span>
<span id="t73" class="t" style="left:612.00px;top:435.00px;color:#000;font-size:13px;font-weight:normal;letter-spacing:0.662px;margin-top:-12.00px;">Border</span>
<span id="t74" class="t" style="left:459.00px;top:463.00px;color:#000;font-size:13px;font-weight:normal;letter-spacing:0.045px;margin-top:-12.00px;">Azimuth</span>
<span id="t75" class="t" style="left:458.00px;top:532.00px;color:#000;font-size:13px;font-weight:normal;letter-spacing:0.344px;margin-top:-12.00px;">Elevation</span>
<div style="left:458px;top:471px;width:330px;height:19px;background:#c3c3c3;box-shadow:inset 1px 1px 0 #828282,inset -1px -1px 0 #ffffff;"></div>
<div style="left:608px;top:473px;width:15px;height:15px;background:#d9d9d9;box-shadow:inset 1px 1px 0 #ffffff,inset -1px -1px 0 #828282;"></div>
<div style="left:623px;top:473px;width:15px;height:15px;background:#d9d9d9;box-shadow:inset 1px 1px 0 #ffffff,inset -1px -1px 0 #828282;"></div>
<div style="left:792px;top:471px;width:60px;height:19px;background:#d9d9d9;box-shadow:inset 1px 1px 0 #828282,inset -1px -1px 0 #ffffff;"></div>
<span id="t76" class="t" style="left:795.00px;top:485.00px;color:#000;font-size:13px;font-weight:normal;letter-spacing:0.000px;margin-top:-12.00px;">0</span>
<div style="left:458px;top:540px;width:330px;height:19px;background:#c3c3c3;box-shadow:inset 1px 1px 0 #828282,inset -1px -1px 0 #ffffff;"></div>
<div style="left:608px;top:542px;width:15px;height:15px;background:#d9d9d9;box-shadow:inset 1px 1px 0 #ffffff,inset -1px -1px 0 #828282;"></div>
<div style="left:623px;top:542px;width:15px;height:15px;background:#d9d9d9;box-shadow:inset 1px 1px 0 #ffffff,inset -1px -1px 0 #828282;"></div>
<div style="left:792px;top:540px;width:60px;height:19px;background:#d9d9d9;box-shadow:inset 1px 1px 0 #828282,inset -1px -1px 0 #ffffff;"></div>
<span id="t77" class="t" style="left:795.00px;top:554.00px;color:#000;font-size:13px;font-weight:normal;letter-spacing:0.000px;margin-top:-12.00px;">0</span>
<span id="t78" class="t" style="left:475.50px;top:507.00px;color:#000;font-size:13px;font-weight:normal;letter-spacing:0.404px;margin-top:-12.00px;">-180</span>
<span id="t79" class="t" style="left:544.00px;top:507.00px;color:#000;font-size:13px;font-weight:normal;letter-spacing:0.720px;margin-top:-12.00px;">-90</span>
<span id="t80" class="t" style="left:618.50px;top:507.00px;color:#000;font-size:13px;font-weight:normal;letter-spacing:0.000px;margin-top:-12.00px;">0</span>
<span id="t81" class="t" style="left:681.29px;top:507.00px;color:#000;font-size:13px;font-weight:normal;letter-spacing:1.200px;margin-top:-12.00px;">90</span>
<span id="t82" class="t" style="left:744.50px;top:507.00px;color:#000;font-size:13px;font-weight:normal;letter-spacing:0.770px;margin-top:-12.00px;">180</span>
<span id="t83" class="t" style="left:479.00px;top:576.00px;color:#000;font-size:13px;font-weight:normal;letter-spacing:0.720px;margin-top:-12.00px;">-90</span>
<span id="t84" class="t" style="left:545.00px;top:576.00px;color:#000;font-size:13px;font-weight:normal;letter-spacing:0.720px;margin-top:-12.00px;">-45</span>
<span id="t85" class="t" style="left:618.50px;top:576.00px;color:#000;font-size:13px;font-weight:normal;letter-spacing:0.000px;margin-top:-12.00px;">0</span>
<span id="t86" class="t" style="left:681.29px;top:576.00px;color:#000;font-size:13px;font-weight:normal;letter-spacing:1.200px;margin-top:-12.00px;">45</span>
<span id="t87" class="t" style="left:748.29px;top:576.00px;color:#000;font-size:13px;font-weight:normal;letter-spacing:1.200px;margin-top:-12.00px;">90</span>
<div style="left:454px;top:584px;width:402px;height:1px;background:#828282;"></div>
<div style="left:454px;top:585px;width:402px;height:1px;background:#ffffff;"></div>
<div style="left:454px;top:611px;width:402px;height:1px;background:#828282;"></div>
<div style="left:454px;top:612px;width:402px;height:1px;background:#ffffff;"></div>
<div style="left:454px;top:638px;width:402px;height:1px;background:#828282;"></div>
<div style="left:454px;top:639px;width:402px;height:1px;background:#ffffff;"></div>
<span id="t88" class="t" style="left:460.00px;top:603.00px;color:#000;font-size:13px;font-weight:normal;letter-spacing:0.272px;margin-top:-12.00px;">Z Axis Scale</span>
<div style="left:542px;top:589px;width:61px;height:19px;background:#d9d9d9;box-shadow:inset 1px 1px 0 #828282,inset -1px -1px 0 #ffffff;"></div>
<span id="t89" class="t" style="left:545.00px;top:603.00px;color:#000;font-size:13px;font-weight:normal;letter-spacing:0.000px;margin-top:-12.00px;">1</span>
<span id="t90" class="t" style="left:460.00px;top:630.00px;color:#000;font-size:13px;font-weight:normal;letter-spacing:-0.071px;margin-top:-12.00px;">Status</span>
<div style="left:504px;top:616px;width:350px;height:19px;background:#c3c3c3;box-shadow:inset 1px 1px 0 #828282,inset -1px -1px 0 #ffffff;"></div>
<div style="left:479px;top:644px;width:83px;height:26px;background:#d9d9d9;box-shadow:inset 1px 1px 0 #ffffff,inset -1px -1px 0 #828282;"></div>
<span id="t91" class="t" style="left:502.00px;top:661.00px;color:#000;font-size:13px;font-weight:normal;letter-spacing:0.995px;margin-top:-12.00px;">Apply</span>
<div style="left:613px;top:644px;width:83px;height:26px;background:#d9d9d9;box-shadow:inset 1px 1px 0 #ffffff,inset -1px -1px 0 #828282;"></div>
<span id="t92" class="t" style="left:635.00px;top:661.00px;color:#000;font-size:13px;font-weight:normal;letter-spacing:0.913px;margin-top:-12.00px;">Reset</span>
<div style="left:747px;top:644px;width:83px;height:26px;background:#d9d9d9;box-shadow:inset 1px 1px 0 #ffffff,inset -1px -1px 0 #828282;"></div>
<span id="t93" class="t" style="left:771.00px;top:661.00px;color:#000;font-size:13px;font-weight:normal;letter-spacing:0.498px;margin-top:-12.00px;">Close</span>
<div style="left:620px;top:675px;width:14px;height:2px;background:repeating-linear-gradient(90deg,#8a8a8a 0 1px,#d8d8d8 1px 3px);"></div>
<div style="left:489px;top:737px;width:3px;height:3px;background:#b0b0b0;"></div>
<div style="left:493px;top:737px;width:3px;height:3px;background:#7b5c7f;"></div>
<div style="left:497px;top:737px;width:3px;height:3px;background:#b0b0b0;"></div>
<div style="left:501px;top:737px;width:3px;height:3px;background:#7b5c7f;"></div>
<div style="left:492px;top:737px;width:1px;height:3px;background:#333;"></div>
<div style="left:496px;top:737px;width:1px;height:3px;background:#333;"></div>
<div style="left:500px;top:737px;width:1px;height:3px;background:#333;"></div>
<div style="left:504px;top:737px;width:1px;height:3px;background:#333;"></div>
</body></html>
